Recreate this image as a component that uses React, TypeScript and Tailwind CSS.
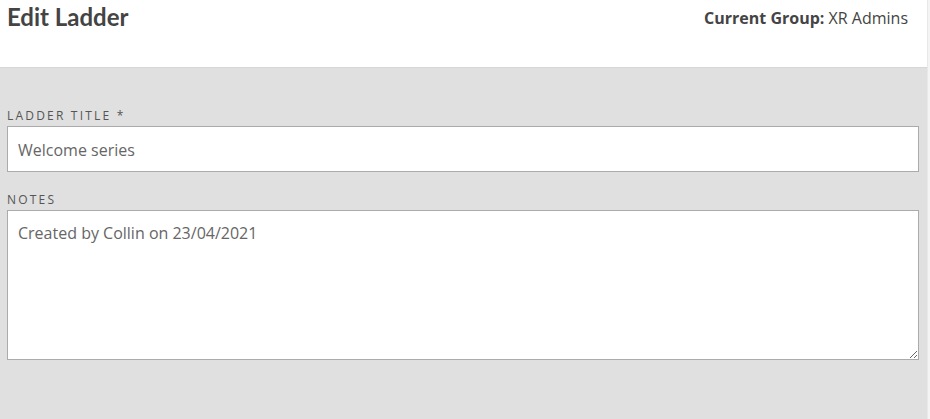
export default function App() {
  return (
    <div className="flex h-[419px] w-[930px] bg-[#f4f4f4]">
      <div className="flex w-[928px] flex-col border-r border-[#e8e8e8] bg-[#e0e0e0]">
        <header className="flex h-[68px] items-start justify-between border-b border-[#d6d6d6] bg-white px-[7px]">
          <h1 className="mt-[2px] font-['Lato',sans-serif] text-[24px] font-bold leading-[30px] text-[#444]">
            Edit Ladder
          </h1>
          <p className="mr-[12px] mt-[7px] font-['Open_Sans',sans-serif] text-[16px] leading-[22px] text-[#444]">
            <span className="font-bold">Current Group:</span> XR Admins
          </p>
        </header>

        <main className="flex flex-col pl-[7px] pr-[8px] pt-[41px] font-['Open_Sans',sans-serif]">
          <label className="text-[12px] leading-[14px] tracking-[2.2px] text-[#555]">LADDER TITLE *</label>
          <input
            readOnly
            value="Welcome series"
            className="mt-[3px] h-[46px] w-full border border-[#ababab] bg-white px-[10px] pt-[1px] text-[16px] text-[#666] outline-none"
          />
          <label className="mt-[21px] text-[12px] leading-[14px] tracking-[2.2px] text-[#555]">NOTES</label>
          <textarea
            readOnly
            value="Created by Collin on 23/04/2021"
            className="mt-[3px] h-[150px] w-full border border-[#ababab] bg-white px-[10px] py-[10px] text-[16px] leading-[24px] text-[#666] outline-none"
          />
        </main>
      </div>
    </div>
  );
}
